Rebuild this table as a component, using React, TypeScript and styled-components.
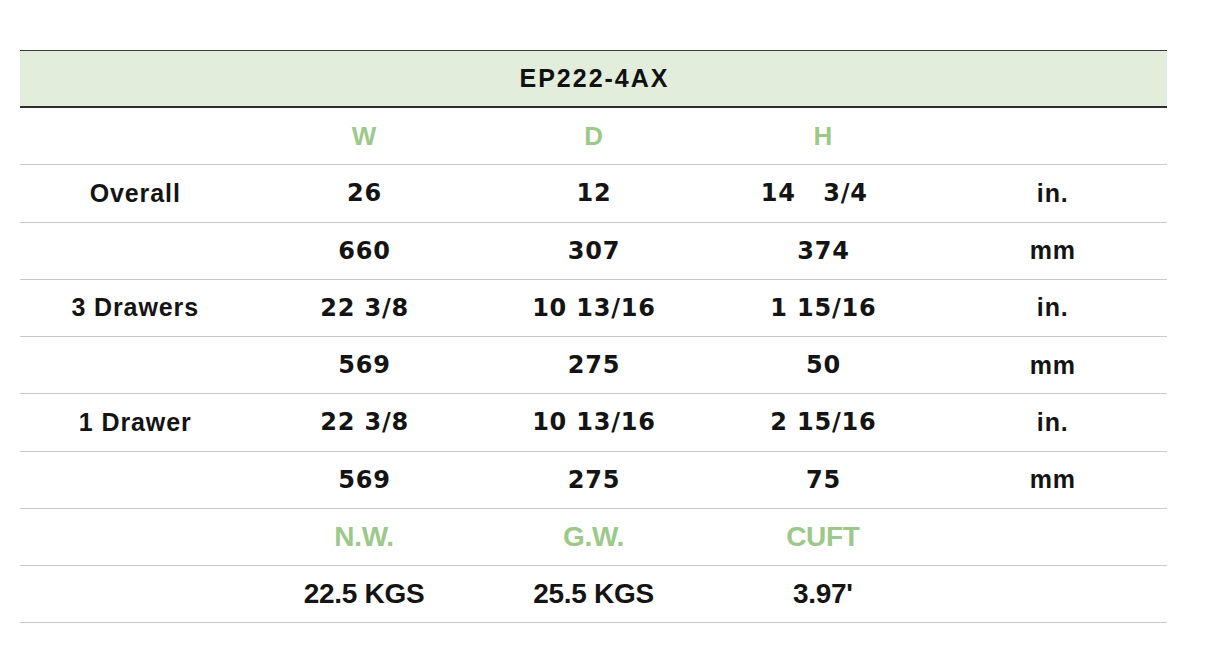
import styled, { createGlobalStyle } from 'styled-components';

const GlobalStyle = createGlobalStyle`
  body {
    margin: 0;
    background: #ffffff;
    font-family: 'Liberation Sans', Arial, sans-serif;
  }
`;

const Page = styled.div`
  padding: 50px 52px 0 20px;
`;

const Table = styled.div`
  width: 1147px;
  display: flex;
  flex-direction: column;
`;

const Title = styled.div`
  box-sizing: border-box;
  height: 58px;
  display: flex;
  align-items: center;
  justify-content: center;
  padding-left: 2px;
  background: #e2eedb;
  border-top: 1.5px solid #3a3a3a;
  border-bottom: 2px solid #2e2e2e;
  font-size: 25px;
  font-weight: 700;
  color: #111;
  letter-spacing: 2px;
`;

const Row = styled.div`
  box-sizing: border-box;
  display: grid;
  grid-template-columns: repeat(5, 1fr);
  height: 57.25px;
  border-bottom: 1.5px solid #c9c9c9;
`;

const Cell = styled.div<{ $green?: boolean; $narrow?: boolean; $num?: boolean }>`
  display: flex;
  align-items: center;
  justify-content: center;
  white-space: pre;
  font-family: ${(p) =>
    p.$num && !p.$narrow
      ? "'DejaVu Sans', Verdana, sans-serif"
      : "'Liberation Sans', Arial, sans-serif"};
  font-size: ${(p) => (p.$narrow ? '28px' : p.$num ? '24px' : p.$green ? '26px' : '25px')};
  font-weight: 700;
  letter-spacing: ${(p) => (p.$narrow ? '-0.3px' : p.$num ? '0.8px' : '0.9px')};
  padding-left: ${(p) => (p.$narrow ? '0' : '1px')};
  color: ${(p) => (p.$green ? '#9cc98a' : '#141414')};
`;

type RowData = { cells: string[]; green?: boolean; narrow?: boolean };

const rows: RowData[] = [
  { cells: ['', 'W', 'D', 'H', ''], green: true },
  { cells: ['Overall', '26', '12', '14   3/4  ', 'in.'] },
  { cells: ['', '660', '307', '374', 'mm'] },
  { cells: ['3 Drawers', '22 3/8', '10 13/16', '1 15/16', 'in.'] },
  { cells: ['', '569', '275', '50', 'mm'] },
  { cells: ['1 Drawer', '22 3/8', '10 13/16', '2 15/16', 'in.'] },
  { cells: ['', '569', '275', '75', 'mm'] },
  { cells: ['', 'N.W.', 'G.W.', 'CUFT', ''], green: true, narrow: true },
  { cells: ['', '22.5 KGS', '25.5 KGS', "3.97'", ''], narrow: true },
];

const isNum = (s: string) => /^[\d\s/]+$/.test(s);

const App = () => {
  return (
    <Page>
      <GlobalStyle />
      <Table>
        <Title>EP222-4AX</Title>
        {rows.map((r, i) => (
          <Row key={i}>
            {r.cells.map((c, j) => (
              <Cell key={j} $green={r.green} $narrow={r.narrow} $num={isNum(c)}>
                {c}
              </Cell>
            ))}
          </Row>
        ))}
      </Table>
    </Page>
  );
};

export default App;
